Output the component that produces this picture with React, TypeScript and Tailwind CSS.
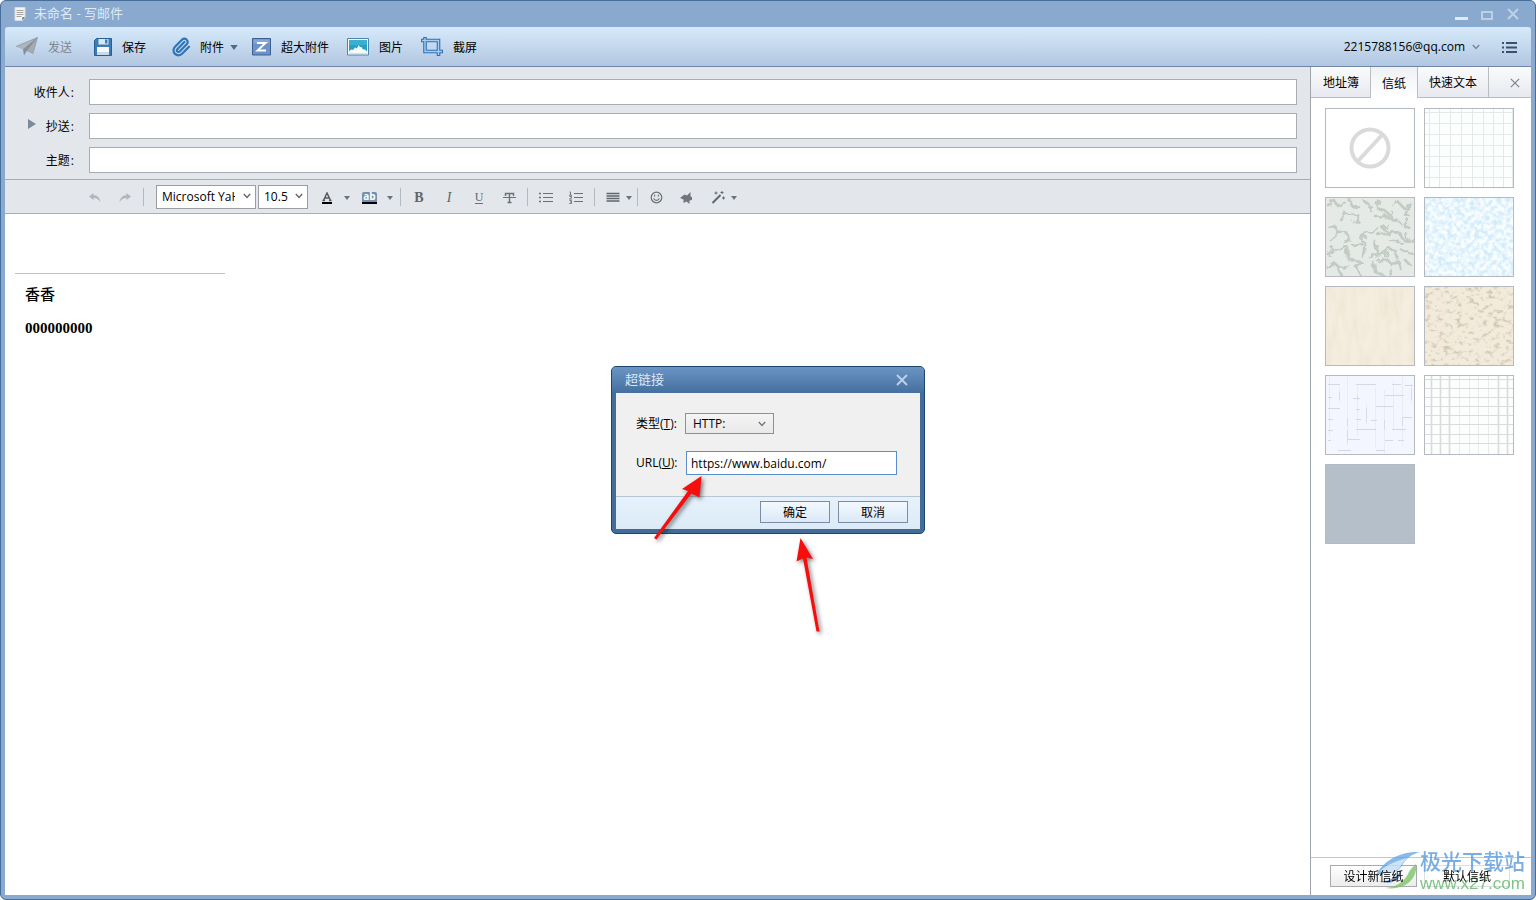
import type { ReactNode } from 'react'
import { useState } from 'react'
import clsx from 'clsx'
import { Paperclip } from 'lucide-react'

const tabs = ['地址簿', '信纸', '快速文本']

function Caret({ className = 'text-[#687480]' }: { className?: string }) {
    return (
        <svg width="6" height="4" viewBox="0 0 6 4" className={className} aria-hidden="true">
            <path d="M0 0h6L3 4z" fill="currentColor" />
        </svg>
    )
}

function Chevron({ className }: { className?: string }) {
    return (
        <svg width="8" height="6" viewBox="0 0 8 6" className={className} aria-hidden="true">
            <path d="M.8 1 4 4.4 7.2 1" fill="none" stroke="currentColor" strokeWidth="1.4" />
        </svg>
    )
}

function Cross({ size, className, weight = 1.9 }: { size: number; className?: string; weight?: number }) {
    return (
        <svg width={size} height={size} viewBox="0 0 12 12" className={className} aria-hidden="true">
            <path d="M1 1l10 10M11 1 1 11" fill="none" stroke="currentColor" strokeWidth={weight} />
        </svg>
    )
}

function NoteIcon() {
    return (
        <svg width="12" height="14" viewBox="0 0 12 14" aria-hidden="true">
            <path d="M1 .5h10v10L8.5 13.5H1z" fill="#f4f3f0" stroke="#d9dde2" />
            <path d="M2.5 3.5h7M2.5 5.5h7M2.5 7.5h7M2.5 9.5h5" stroke="#a5a5a3" />
            <path d="M11 10.3H8.3v3.2z" fill="#5d7186" />
        </svg>
    )
}

function SendIcon() {
    return (
        <svg width="22" height="20" viewBox="0 0 22 20" aria-hidden="true">
            <path d="M0 9.5 21.5.5 17 16.5l-6-3z" fill="#a3abb3" />
            <path d="M0 9.5 21.5.5 7 12.5z" fill="#adb5bd" />
            <path d="M7 12.5 21.5.5 11 13.5 8 18.5z" fill="#868e97" />
            <path d="M0 9.5 21.5.5 17 16.5l-6-3M7 12.5 21.5.5" fill="none" stroke="#8f979f" strokeWidth=".7" />
        </svg>
    )
}

function SaveIcon() {
    return (
        <svg width="18" height="18" viewBox="0 0 18 18" aria-hidden="true">
            <path d="M2.5.5h15v17H.5v-15z" fill="#3d7cb4" stroke="#285f92" />
            <path d="M4.5 1h10v5.5h-10z" fill="#d9e8f5" />
            <path d="M11 1.5h2.4v4H11z" fill="#3d7cb4" />
            <path d="M3 9h12v8H3z" fill="#f2f8fd" />
            <path d="M3 14h12v3H3z" fill="#c5daeb" />
        </svg>
    )
}

function LargeFileIcon() {
    return (
        <svg width="19" height="18" viewBox="0 0 19 18" aria-hidden="true">
            <path d="M.5.5h18V17H.5z" fill="#6b93c9" stroke="#3f5e90" />
            <path d="M1.5 1.5h16v4h-16z" fill="#83a7d6" />
            <path d="M5 5h8.5l-8 7.5H14" fill="none" stroke="#fff" strokeWidth="1.9" />
        </svg>
    )
}

function PictureIcon() {
    return (
        <svg width="22" height="18" viewBox="0 0 22 18" aria-hidden="true">
            <path d="M.5.5h21V17H.5z" fill="#fff" stroke="#4d87a8" />
            <path d="M2 2h18v13.5H2z" fill="#27a0c4" />
            <path d="M2 2h18v5H2z" fill="#3bafcf" />
            <path d="m2 13.5 2-2 2 .5 2-2.500 2 1 1.500-3.500L13 9h1.500l1.500 2.500h2l2 2v2H2z" fill="#f5fbfd" />
        </svg>
    )
}

function CropIcon() {
    return (
        <svg width="22" height="19" viewBox="0 0 22 19" fill="none" aria-hidden="true">
            <path d="M0 3.5h17.5V19M4 0v14.5h18" stroke="#2f6fb5" strokeWidth="3.6" />
            <path d="M1 3.5h16.500V18M4 1v13.500h17" stroke="#a9cdf0" strokeWidth="1.4" />
        </svg>
    )
}

function ToolButton({ icon, label, disabled, caret, className }: {
    icon: ReactNode
    label: string
    disabled?: boolean
    caret?: boolean
    className?: string
}) {
    return (
        <button
            type="button"
            disabled={disabled}
            className={clsx('flex items-center gap-2.5 whitespace-nowrap disabled:text-[#7b8794]', className)}
        >
            {icon}
            <span className="pt-0.5">{label}</span>
            {caret && <Caret className="mt-0.5 -ml-1 h-[5px] w-2 text-[#4e6a88]" />}
        </button>
    )
}

function FormatButton({ title, children, className = 'w-[30px] justify-center' }: {
    title: string
    children: ReactNode
    className?: string
}) {
    return (
        <button type="button" aria-label={title} className={clsx('flex h-6 shrink-0 items-center pt-0.5', className)}>
            {children}
        </button>
    )
}

function Divider() {
    return <span className="mx-[3px] h-[18px] w-px shrink-0 bg-[#b3b9be]" />
}

function Field({ id, label, expandable }: { id: string; label: string; expandable?: boolean }) {
    return (
        <div className="flex h-[26px] items-center">
            <div className="flex w-[84px] shrink-0 items-center justify-end pt-0.5 pr-[15px]">
                {expandable && (
                    <button type="button" aria-label="展开" className="mr-2.5 mb-1.5">
                        <svg width="8" height="10" viewBox="0 0 8 10" aria-hidden="true">
                            <path d="M0 0 8 5 0 10z" fill="#7c8b9b" />
                        </svg>
                    </button>
                )}
                <label htmlFor={id} className="flex gap-px">{label}<span>:</span></label>
            </div>
            <input id={id} type="text" className="h-full min-w-0 flex-1 border border-[#a9adb0] bg-white px-1 outline-none" />
        </div>
    )
}

const strike = { fill: 'none', stroke: '#6b7176' }

function FormatBar() {
    return (
        <div className="flex h-[34px] items-center border-b border-[#a7adb2] pl-[75px]">
            <FormatButton title="撤销">
                <svg width="12" height="10" viewBox="0 0 12 10" aria-hidden="true">
                    <path d="M0 3.5 4.5 0v2.3C8.5 2.3 11 5 11.5 9.5 9.8 6.4 8 5 4.5 4.9V7z" fill="#b1b7bc" />
                </svg>
            </FormatButton>
            <FormatButton title="重做">
                <svg width="12" height="10" viewBox="0 0 12 10" aria-hidden="true">
                    <path d="M12 3.5 7.5 0v2.3C3.5 2.3 1 5 .5 9.5 2.2 6.4 4 5 7.5 4.9V7z" fill="#b1b7bc" />
                </svg>
            </FormatButton>
            <Divider />
            <div className="relative ml-[9px] h-6 w-[100px] shrink-0">
                <select aria-label="字体" className="h-full w-full appearance-none overflow-hidden border border-[#9a9ea2] bg-white pt-px pr-5 pl-[5px] outline-none">
                    <option>Microsoft YaHei</option>
                </select>
                <Chevron className="pointer-events-none absolute top-2 right-[5px] text-[#666]" />
            </div>
            <div className="relative ml-0.5 h-6 w-[50px] shrink-0">
                <select aria-label="字号" className="h-full w-full appearance-none border border-[#9a9ea2] bg-white pt-px pr-4 pl-[5px] outline-none">
                    <option>10.5</option>
                </select>
                <Chevron className="pointer-events-none absolute top-2 right-[5px] text-[#666]" />
            </div>
            <FormatButton title="字体颜色" className="gap-2.5 pr-1 pl-3">
                <span className="w-[14px] px-0.5 text-center">
                    <svg width="10" height="12" viewBox="0 0 10 12" aria-hidden="true">
                        <path d="M1.5 8.5 5 1l3.5 7.500M3 6h4M.5 8.500h2.500M7 8.500h2.500" fill="none" stroke="#555b60" strokeWidth="1.5" />
                        <path d="M0 10h10v2H0z" fill="#000" />
                    </svg>
                </span>
                <Caret />
            </FormatButton>
            <FormatButton title="突出显示" className="gap-2.5 pr-1 pl-2">
                <span className="flex h-[12px] w-[15px] items-center justify-center rounded-t-xs border-b-2 border-black bg-[#7391ad] pb-0.5 text-[10px] leading-none font-bold text-white">
                    ab
                </span>
                <Caret />
            </FormatButton>
            <Divider />
            <FormatButton title="加粗">
                <span className="font-['Liberation_Serif',serif] text-[14px] font-bold text-[#5f666c]">B</span>
            </FormatButton>
            <FormatButton title="斜体">
                <span className="font-['Liberation_Serif',serif] text-[14px] text-[#5f666c] italic">I</span>
            </FormatButton>
            <FormatButton title="下划线">
                <span className="border-b border-[#6b7176] font-['Liberation_Serif',serif] text-[12px] leading-[11px] text-[#5f666c]">U</span>
            </FormatButton>
            <FormatButton title="删除线">
                <svg width="13" height="12" viewBox="0 0 13 12" aria-hidden="true" {...strike}>
                    <path d="M2.5 4V1.5h8V4M6.5 1.500v9M4.500 10.500h4" strokeWidth="1.4" />
                    <path d="M0 5.500h13" />
                </svg>
            </FormatButton>
            <Divider />
            <FormatButton title="项目符号">
                <svg width="14" height="11" viewBox="0 0 14 11" aria-hidden="true" {...strike}>
                    <path d="M4 1.500h10M4 5.500h10M4 9.500h10" />
                    <path d="M0 1.500h2M0 5.500h2M0 9.500h2" strokeWidth="1.5" />
                </svg>
            </FormatButton>
            <FormatButton title="编号">
                <svg width="14" height="13" viewBox="0 0 14 13" aria-hidden="true" {...strike}>
                    <path d="M5 2.500h9M5 6.500h9M5 10.500h9" />
                    <path d="M.5 1h1v3M0 4.200h3M.5 5.500h2v1L.5 8H3M.5 9.500h2v3H.3M1 11h1.500" strokeWidth=".9" />
                </svg>
            </FormatButton>
            <Divider />
            <FormatButton title="对齐" className="gap-1.5 pr-0.5 pl-2">
                <svg width="14" height="11" viewBox="0 0 14 11" aria-hidden="true">
                    <path d="M.5 1.500h13M.5 4h13M.5 6.500h13M.5 9h13" stroke="#5f666c" strokeWidth="1.3" />
                </svg>
                <Caret />
            </FormatButton>
            <Divider />
            <FormatButton title="表情">
                <svg width="13" height="13" viewBox="0 0 13 13" aria-hidden="true" {...strike}>
                    <circle cx="6.5" cy="6.5" r="5.3" strokeWidth="1.2" />
                    <path d="M3.700 7.300c.8 2.700 4.800 2.700 5.600 0M4.600 3.800v1.600M8.400 3.800v1.600" strokeWidth="1.2" />
                </svg>
            </FormatButton>
            <FormatButton title="签名">
                <svg width="12" height="12" viewBox="0 0 12 12" aria-hidden="true">
                    <path d="M0 6 4.500 2.500 7 3.500 10.500 0v4.500L12 5v3L9.500 8.500V12L6.500 9.500 3.500 11V7.500z" fill="#70767b" />
                </svg>
            </FormatButton>
            <FormatButton title="特效" className="gap-1 pl-2.5">
                <svg width="16" height="13" viewBox="0 0 16 13" aria-hidden="true">
                    <path d="m1.500 12 8-8" stroke="#5f666c" strokeWidth="1.9" />
                    <path d="M5 .5v3M3.500 2h3M11 0v3M9.500 1.500h3M12.500 5.500v3M11 7h3" stroke="#5f666c" />
                </svg>
                <Caret />
            </FormatButton>
        </div>
    )
}

function GridPaper() {
    return (
        <g stroke="#e4e9e9">
            <path d="M4.500 0v78M14.500 0v78M25.500 0v78M36.500 0v78M47.500 0v78M58.500 0v78M68.500 0v78M78.500 0v78M87.500 0v78" />
            <path d="M0 3.500h88M0 14.500h88M0 25.500h88M0 36.500h88M0 47.500h88M0 57.500h88M0 68.500h88" />
        </g>
    )
}

function PlaidPaper() {
    return (
        <g stroke="#d9dbdd">
            <path d="M6.500 0v78M15.500 0v78M24.500 0v78M73.500 0v78M82.500 0v78" strokeWidth="1.6" />
            <path d="M34.500 0v78M44.500 0v78M53.500 0v78M63.500 0v78" stroke="#e9ebec" />
            <path d="M0 3.500h88M0 12.500h88M0 21.500h88M0 30.500h88M0 39.500h88M0 48.500h88M0 58.500h88M0 67.500h88" />
        </g>
    )
}

function WeavePaper() {
    return (
        <g fill="none">
            <path d="M3.500 0v60M13.500 12v14M21.500 0v70M31.500 10v50M40.500 28v20M49.500 12v60M58.500 14v64M67.500 5v50M76.500 0v70M85.500 8v20" stroke="#e9ebf9" />
            <path d="M2 8.500h12M30 8.500h20M66 8.500h9M79 9.500h8M59 19.500h19M2 21.500h4M27 22.500h7M50 30.500h17M2 32.500h12M30 33.500h4M2 43.500h5M30 43.500h5M45 44.500h6M76 41.500h10M2 54.500h5M30 53.500h20M66 53.500h14M2 64.500h3M22 63.500h12M59 64.500h8M72 64.500h6M12 74.500h13M50 74.500h9" stroke="#d5d7e4" />
            <path d="M13.500 16v8M40.500 32v14M21.500 42v8M58.500 44v10M85.500 12v12M31.500 20v4M76.500 42v8M21.500 54v12" stroke="#d9dbe8" />
        </g>
    )
}

function StonePaper() {
    return (
        <>
            <filter id="stone">
                <feTurbulence type="fractalNoise" baseFrequency="0.12" numOctaves="3" seed="2" result="noise" />
                <feDisplacementMap in="SourceGraphic" in2="noise" scale="9" />
                <feGaussianBlur stdDeviation="0.7" />
            </filter>
            <g fill="none" stroke="#c3cbc5" strokeWidth="2.6" strokeLinecap="round" strokeLinejoin="round" filter="url(#stone)">
                <path d="M1 6 9 3l3 5 7-3M24 2l2 6 8 2M39 4l5 3-1 5M53 3l-2 8 8 2 5 4M66 7l6-3 5 5 9-2M81 9l-3 7 7 3" />
                <path d="M13 20l7-4 12 1 2 7-6 1M49 18l9-1 8 4M66 14v8l8 3M82 22l-4 6 6 2" />
                <path d="M2 28l8 1 2 6 9-1 2 8-5 2M10 35l-6 6M26 46l9-2 1-7 11-3 3-5M35 37l6 3M52 37h9l5-4 8 2 3 6M61 26l-4 5 5 3M80 35v9l6-3" />
                <path d="M2 56l7-5h8l4-3M22 51l1 11 12 2M38 44v16M35 64l-4 6 3 6M49 43l2 13-7 3M51 56l10 1 1-7M62 50l8 3 2 8M66 44h10M76 52l10 3" />
                <path d="M1 69l7-4 6 5 8-3M13 70l2 7M48 65l1 9 8 3M52 63l9-2 4 5 8-2 1 6M63 70l2 7M79 62l6 6" />
            </g>
        </>
    )
}

function NoPaper() {
    return (
        <g fill="none" stroke="#dadada" strokeWidth="4">
            <circle cx="44" cy="39" r="18.5" />
            <path d="M32 52 56 26" />
        </g>
    )
}

// Noise drawn in one colour; alpha = noise * gain + offset
function Grain({ id, freq, color, gain, offset }: {
    id: string
    freq: string
    color: string
    gain: number
    offset: number
}) {
    return (
        <>
            <filter id={id} x="0" y="0" width="100%" height="100%" colorInterpolationFilters="sRGB">
                <feTurbulence type="fractalNoise" baseFrequency={freq} numOctaves="4" seed="7" />
                <feColorMatrix values={`0 0 0 0 0  0 0 0 0 0  0 0 0 0 0  ${gain} 0 0 0 ${offset}`} result="mask" />
                <feFlood floodColor={color} />
                <feComposite operator="in" in2="mask" />
            </filter>
            <rect width="88" height="78" filter={`url(#${id})`} />
        </>
    )
}

const papers: { name: string; bg: string; art?: ReactNode }[] = [
    { name: '无信纸', bg: 'bg-white', art: <NoPaper /> },
    { name: '方格', bg: 'bg-[#fdfefe]', art: <GridPaper /> },
    { name: '石纹', bg: 'bg-[#e5eae6]', art: <StonePaper /> },
    { name: '冰雪', bg: 'bg-[#f8fdff]', art: <Grain id="ice" freq="0.22" color="#d2ebfa" gain={3} offset={-1.1} /> },
    { name: '米黄', bg: 'bg-[#f5eee0]', art: <Grain id="cream" freq="0.12 0.03" color="#ede4d2" gain={2} offset={-0.8} /> },
    { name: '砂岩', bg: 'bg-[#f2eadb]', art: <Grain id="sand" freq="0.16 0.22" color="#d0c6b4" gain={4} offset={-2.1} /> },
    { name: '编织', bg: 'bg-[#f3f5ff]', art: <WeavePaper /> },
    { name: '格纹', bg: 'bg-[#fcfdfd]', art: <PlaidPaper /> },
    { name: '灰蓝', bg: 'bg-[#b4bfca]' },
]

function Sidebar() {
    const [active, setActive] = useState('信纸')

    return (
        <aside className="relative flex w-[221px] shrink-0 flex-col border-l border-[#9fa5ab] bg-white">
            <div className="flex h-[31px] border-b border-[#b9bdc2] bg-linear-to-b from-[#fafbfc] to-[#e6e9ef]">
                {tabs.map((tab) => (
                    <button
                        key={tab}
                        type="button"
                        onClick={() => setActive(tab)}
                        className={clsx(
                            'border-r border-[#b9bdc2] pt-0.5 pr-[11px] pl-[11px] first:pl-3',
                            tab === active && '-mb-px bg-linear-to-b from-[#eef1f4] to-white'
                        )}
                    >
                        {tab}
                    </button>
                ))}
                <button type="button" aria-label="关闭侧栏" className="ml-auto px-[11px] pt-0.5">
                    <Cross size={10} weight={1.5} className="text-[#83888e]" />
                </button>
            </div>

            {/* Stationery thumbnails */}
            <div className="flex flex-1 flex-wrap content-start gap-[9px] pt-2.5 pl-[14px]">
                {papers.map((paper) => (
                    <button
                        key={paper.name}
                        type="button"
                        aria-label={paper.name}
                        className={clsx('h-20 w-[90px] border border-[#b4bac0]', paper.bg)}
                    >
                        <svg width="88" height="78" viewBox="0 0 88 78" aria-hidden="true">{paper.art}</svg>
                    </button>
                ))}
            </div>

            <div className="flex h-[38px] gap-[7px] border-t border-[#c5c8cb] pt-[7px] pl-[19px]">
                <button type="button" className="h-[22px] w-[87px] border border-[#a8abae] bg-linear-to-b from-white to-[#ececec] pt-0.5">
                    <span className="relative z-10">设计新信纸</span>
                </button>
                <button type="button" className="h-[22px] w-[86px] border border-[#dcdfe2] bg-white pt-0.5">
                    <span className="relative z-10">默认信纸</span>
                </button>
            </div>

            <Watermark />
        </aside>
    )
}

function Watermark() {
    return (
        <div className="pointer-events-none absolute right-1.5 bottom-0 flex items-end opacity-80">
            <svg width="46" height="40" viewBox="0 0 46 40" className="mb-1" aria-hidden="true">
                <path d="M1 26C8 11 24 0 46 1c-8 2-13 6-17 12-4 7-9 9-15 9-5 0-9 1-13 4z" fill="#6aa9e3" />
                <path d="M6 20C14 13 24 9 34 7c-4 3-6 6-8 9-6 7-12 7-20 4z" fill="#c3def5" />
                <path d="M11 37c11-1 17-5 22-12 2-5 5-9 9-12 2 12-8 27-31 24z" fill="#7dc568" />
                <path d="M5 30c10 1 17-3 22-10 0 8-9 15-22 10z" fill="#4c79b9" />
            </svg>
            <div className="leading-none whitespace-nowrap">
                <div className="text-[21px] leading-6 font-medium text-[#5a9bdb]">极光下载站</div>
                <div className="font-['Liberation_Sans',sans-serif] text-[17px] leading-[22px] text-[#5fb568]">www.x27.com</div>
            </div>
        </div>
    )
}

function LinkDialog() {
    const [url, setUrl] = useState('https://www.baidu.com/')

    return (
        <div className="pointer-events-none fixed inset-0 flex items-center justify-center">
            <div className="pointer-events-auto relative w-[314px]">
                <div role="dialog" aria-labelledby="link-title" className="rounded-[5px] border border-[#1d466d] bg-[#436c99] px-1 pb-1">
                    <div className="-mx-1 flex h-[26px] items-center justify-between rounded-t-[4px] bg-linear-to-b from-[#6b95c3] to-[#446f9f] pr-4 pl-[13px]">
                        <h2 id="link-title" className="text-[13px] text-[#dbe8f5]">超链接</h2>
                        <button type="button" aria-label="关闭">
                            <Cross size={12} className="text-[#bdd2e8]" />
                        </button>
                    </div>
                    <div className="flex h-[103px] flex-col gap-[17px] bg-[#f0f0f0] pt-5 pl-5">
                        <div className="flex items-center">
                            <label htmlFor="link-type" className="w-[49px]">类型(<u>T</u>):</label>
                            <div className="relative h-[21px] w-[89px]">
                                <select id="link-type" className="h-full w-full appearance-none border border-[#8e9092] bg-linear-to-b from-[#f4f4f4] to-[#e9e9e9] pl-[7px] outline-none">
                                    <option>HTTP:</option>
                                </select>
                                <Chevron className="pointer-events-none absolute top-2 right-2 text-[#777]" />
                            </div>
                        </div>
                        <div className="flex items-center">
                            <label htmlFor="link-url" className="w-[50px]">URL(<u>U</u>):</label>
                            <input
                                id="link-url"
                                type="text"
                                value={url}
                                onChange={(e) => setUrl(e.target.value)}
                                className="h-6 w-[211px] border border-[#5a8fcd] bg-white px-1 outline-none"
                            />
                        </div>
                    </div>
                    <div className="flex h-[33px] justify-end gap-2 border-t border-[#b5c6d6] bg-linear-to-b from-[#e6f1fa] to-[#dcebf7] pt-1 pr-3">
                        <button type="button" className="h-[22px] w-[70px] border border-[#7b8ea3] bg-linear-to-b from-[#f3f9fe] to-[#dae9f6] pt-0.5">确定</button>
                        <button type="button" className="h-[22px] w-[70px] border border-[#7b8ea3] bg-linear-to-b from-[#f3f9fe] to-[#dae9f6] pt-0.5">取消</button>
                    </div>
                </div>

                {/* Pointer arrows */}
                <svg width="314" height="290" viewBox="611 366 314 290" className="pointer-events-none absolute top-0 left-0 drop-shadow-[2px_2px_2px_rgba(0,0,0,0.5)]" aria-hidden="true">
                    <path d="M701.500 476 682 489 688 491 654 538 656.500 539.500 691.500 493.500 699.500 497.500z" fill="#f80d0d" />
                    <path d="M800.500 538 796.500 561.500 803 558.500 816.500 631.500 819.500 631.500 806.500 557.500 813 559z" fill="#f80d0d" />
                </svg>
            </div>
        </div>
    )
}

export default function App() {
    return (
        <div className="flex h-screen flex-col overflow-hidden rounded-md border border-[#476d9b] bg-[#89a9ce] px-1 pb-1 font-['Open_Sans','Noto_Sans_CJK_SC',sans-serif] text-[12px] text-black">
            {/* Title bar */}
            <header className="flex h-[26px] shrink-0 items-center pl-[9px] text-[#dfeaf5]">
                <NoteIcon />
                <h1 className="ml-2 text-[13px]">未命名 - 写邮件</h1>
                <div className="mr-[5px] ml-auto flex">
                    <button type="button" aria-label="最小化" className="flex w-[26px] items-center justify-center pt-2">
                        <span className="h-[3px] w-[13px] bg-[#dfeaf5]" />
                    </button>
                    <button type="button" aria-label="最大化" className="flex w-[26px] items-center justify-center pt-0.5">
                        <span className="h-[9px] w-3 border-2 border-[#b9d0e8]" />
                    </button>
                    <button type="button" aria-label="关闭窗口" className="flex w-[26px] items-center justify-center">
                        <Cross size={12} className="text-[#bdd3ea]" />
                    </button>
                </div>
            </header>

            {/* Main toolbar */}
            <nav className="flex h-10 shrink-0 items-center gap-[18px] rounded-t-[3px] border-b border-[#6f86a6] bg-linear-to-b from-[#d7eafb] to-[#b1c7e0] pr-[14px] pl-[11px]">
                <ToolButton icon={<SendIcon />} label="发送" disabled />
                <ToolButton icon={<SaveIcon />} label="保存" className="ml-1" />
                <ToolButton icon={<Paperclip size={20} strokeWidth={2.6} className="-mx-px text-[#2f74b8]" />} label="附件" caret className="ml-2" />
                <ToolButton icon={<LargeFileIcon />} label="超大附件" className="-ml-1" />
                <ToolButton icon={<PictureIcon />} label="图片" />
                <ToolButton icon={<CropIcon />} label="截屏" />
                <button type="button" className="ml-auto flex items-center gap-[7px]">
                    2215788156@qq.com
                    <Chevron className="text-[#7187a0]" />
                </button>
                <button type="button" aria-label="菜单" className="ml-1 pt-0.5">
                    <svg width="15" height="13" viewBox="0 0 15 13" aria-hidden="true">
                        <path d="M4 2h11M4 6.500h11M4 11h11M0 2h2M0 6.500h2M0 11h2" stroke="#38516d" strokeWidth="2.2" />
                    </svg>
                </button>
            </nav>

            <div className="flex min-h-0 flex-1">
                <main className="flex min-w-0 flex-1 flex-col bg-white">
                    <div className="bg-[#e3e7eb]">
                        <form className="flex flex-col gap-2 border-b border-[#a7adb2] pt-3 pr-[13px] pb-1.5">
                            <Field id="to" label="收件人" />
                            <Field id="cc" label="抄送" expandable />
                            <Field id="subject" label="主题" />
                        </form>
                        <FormatBar />
                    </div>

                    {/* Message body with signature */}
                    <div className="flex-1 px-2.5 pt-[59px]">
                        <hr className="h-px w-[210px] border-0 bg-[#a8cdd0]" />
                        <div className="pt-2.5 pl-2.5 font-['Liberation_Serif','Noto_Sans_CJK_SC',serif] text-[15px] leading-[22px]">
                            <p className="font-medium">香香</p>
                            <p className="mt-[11px] font-bold">000000000</p>
                        </div>
                    </div>
                </main>
                <Sidebar />
            </div>

            <LinkDialog />
        </div>
    )
}
